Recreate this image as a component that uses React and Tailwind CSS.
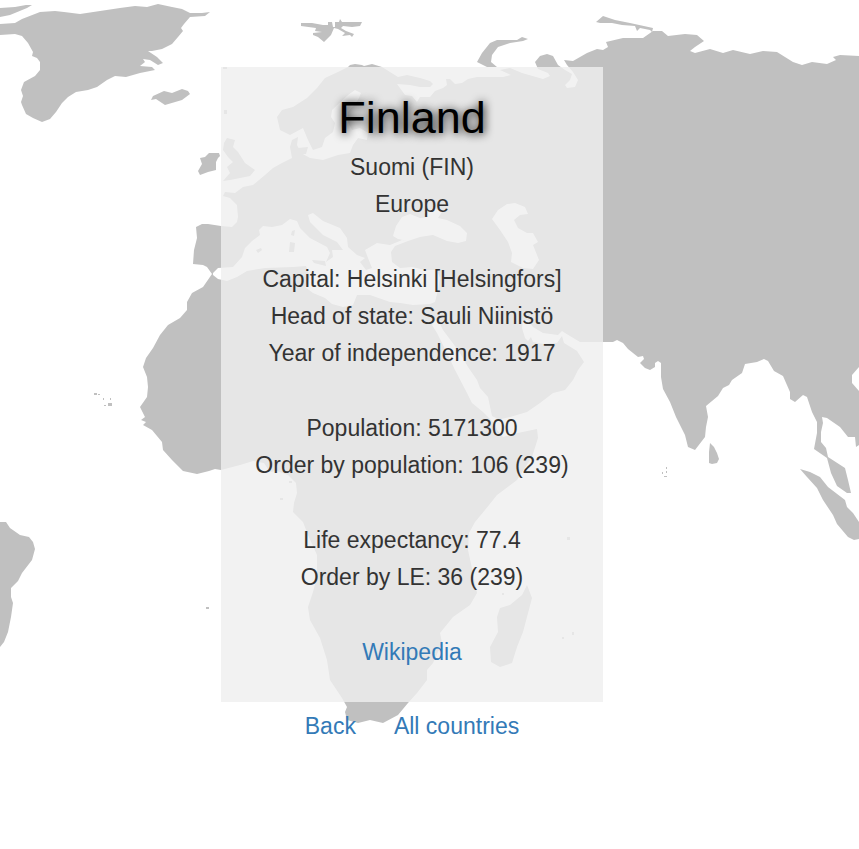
const LAND = [
  // Greenland
  'M0,24L15,23L22,19L40,12L55,11L64,12L80,14L100,11L120,8L135,6L147,7L158,4L172,7L182,9L190,13L202,13L210,12L205,16L190,17L184,24L181,28L183,31L178,37L172,44L162,49L152,51L148,51L157,57L163,63L158,65L150,60L143,59L145,62L140,66L152,67L155,70L140,73L126,77L115,76L107,80L97,87L88,90L76,92L68,97L62,103L56,112L50,119L42,122L33,118L26,114L22,105L21,102L23,96L21,90L24,82L35,76L40,70L40,62L37,58L32,56L33,52L28,43L22,36L15,34L0,35Z',
  'M0,8L15,7L26,5L32,5L27,8L10,15L0,17Z',
  // Iceland
  'M151,100L153,96L164,91L172,93L182,89L188,91L190,94L182,100L165,105L156,99Z',
  // Ireland and Great Britain
  'M200,158L205,157L209,153L219,153L220,156L218,158L216,162L216,170L208,172L200,175L198,171L202,164Z',
  'M227,138L235,140L233,147L238,152L245,163L255,170L250,176L230,180L223,181L230,173L227,167L233,162L228,157L223,150L224,143Z',
  // Svalbard
  'M301,23L312,23L323,25L328,25L328,22L332,22L333,27L335,27L335,22L339,22L340,19L342,22L362,22L360,26L352,27L343,26L341,28L346,31L354,34L352,37L350,35L342,36L345,33L338,29L334,28L331,35L324,42L318,37L313,35L313,33L322,32L315,31L316,28L301,26Z',
  // Novaya Zemlya and Severnaya Zemlya
  'M477,62L482,53L490,43L497,40L517,40L522,37L528,39L523,41L510,43L498,47L492,55L491,62L497,67L487,67Z',
  'M596,22L603,16L615,20L630,23L653,28L652,32L650,30L640,28L637,31L635,26L622,25L612,23L600,23Z',
  // Eurasia and Africa
  'M348,67L350,65L355,64L362,65L364,66L372,64L382,67L390,72L398,77L407,75L420,78L430,81L433,84L430,87L420,87L410,85L397,84L405,95L412,96L417,102L420,97L430,97L435,91L443,88L447,85L446,79L450,79L455,84L462,83L468,79L477,77L492,77L503,77L511,75L500,70L510,68L522,73L543,79L550,76L548,73L538,69L535,62L540,56L547,54L553,56L558,65L565,70L572,74L570,80L565,85L567,88L575,87L578,80L573,72L567,65L564,60L573,61L587,53L597,49L603,50L608,47L606,42L623,38L643,38L653,31L662,31L668,36L685,34L697,35L704,41L695,47L690,51L695,53L710,49L723,53L733,50L750,54L763,51L777,52L785,57L793,62L802,65L812,62L827,64L836,60L833,57L840,55L859,56L859,367L852,375L852,383L859,391L859,445L856,447L855,437L848,437L840,427L827,418L822,417L823,423L821,432L821,442L826,448L828,457L845,468L848,480L851,493L847,493L837,486L831,473L827,458L814,449L817,433L817,422L812,412L807,397L803,395L795,402L790,399L790,392L783,376L774,371L768,361L764,359L757,362L745,364L742,373L732,380L729,385L723,388L718,396L706,406L708,417L706,427L705,437L695,450L688,447L685,435L676,417L670,402L663,389L661,377L661,363L658,361L655,363L655,367L650,370L645,368L640,363L644,359L643,356L638,357L628,349L623,343L617,340L613,342L580,342L565,333L562,331L558,335L543,333L533,327L528,320L523,320L522,328L525,338L528,341L531,337L533,342L543,344L557,343L562,336L564,343L577,351L584,362L578,370L573,380L565,390L553,393L540,403L527,412L510,417L497,420L495,423L497,430L503,437L513,434L537,429L538,438L532,457L517,480L497,495L485,510L475,522L469,533L468,550L473,573L477,593L470,605L453,617L440,633L442,643L433,663L427,670L427,680L417,693L408,703L398,715L383,723L370,720L358,723L347,720L345,712L347,707L342,698L330,680L327,660L320,638L310,620L308,607L313,592L317,577L317,555L308,535L303,522L293,512L294,503L297,493L296,483L288,475L277,471L270,472L264,463L253,461L240,465L221,470L215,469L209,471L197,474L183,471L172,460L163,450L162,442L152,430L143,425L146,422L141,420L145,417L140,407L147,397L148,387L147,377L143,367L146,358L153,348L160,335L168,325L180,318L187,310L187,302L192,293L203,287L212,274L207,267L203,265L193,264L194,250L197,238L196,227L202,224L208,224L221,226L232,227L237,222L238,217L237,205L230,198L223,196L225,192L235,193L243,187L253,185L265,175L273,168L282,163L292,158L290,147L292,140L298,137L297,145L301,153L310,158L323,160L338,155L350,153L353,145L358,138L367,140L368,133L360,128L352,130L348,122L348,112L358,100L361,93L355,90L348,95L332,110L331,117L335,123L333,132L325,138L322,147L313,150L308,140L303,128L290,135L280,130L277,117L282,110L293,107L307,98L317,88L325,78L338,72Z',
  // Danish islands
  'M298,148L308,147L306,154L300,154Z',
  // Sri Lanka, Sumatra, Madagascar
  'M710,443L714,447L717,453L719,459L717,463L712,464L709,463L709,452Z',
  'M800,469L810,472L820,477L828,487L845,500L847,507L853,513L859,522L859,539L854,540L848,537L837,524L833,515L823,500L817,488L807,477Z',
  'M527,585L532,598L523,632L517,647L512,663L500,667L491,662L490,647L498,632L497,617L500,608L510,605L522,595Z',
  // South America
  'M0,522L6,522L10,528L20,535L29,537L33,542L35,549L32,560L22,573L18,581L11,588L11,597L13,603L11,617L8,632L4,642L0,647Z',
  // Small islands
  'M94,393h3v2h-3zM98,394h2v1h-2zM103,398h1v2h-1zM110,398h1v2h-1zM104,405h2v1h-2zM108,403h4v3h-4zM206,607h3v2h-3zM666,467h1v2h-1zM662,472h1v2h-1zM666,471h1v2h-1zM664,476h3v1h-3zM220,232h1v1h-1zM567,537h3v3h-3zM562,637h2v2h-2zM572,632h2v3h-2zM289,481h3v2h-3zM280,498h3v2h-3zM502,593h2v2h-2zM223,67h4v2h-4zM224,110h3v4h-3z',
]

const SEAS = [
  // Mediterranean with the Adriatic and Aegean
  'M213,273L218,268L233,267L242,257L245,248L252,241L260,235L259,230L263,226L272,227L282,225L290,219L297,221L300,228L310,238L327,247L330,253L326,262L333,257L332,250L343,250L337,242L323,235L310,222L308,215L313,213L323,221L340,228L347,238L348,247L357,255L365,258L360,262L366,270L372,268L368,258L365,250L377,243L390,245L402,240L408,241L395,246L391,252L392,262L400,268L412,267L425,270L437,270L440,278L438,290L435,302L430,304L413,305L400,303L390,302L370,295L357,295L353,305L343,307L332,304L325,298L313,293L305,287L310,277L306,266L293,267L265,268L247,271L237,277L227,281L218,279L213,275Z',
  // Black Sea
  'M393,236L396,226L402,217L410,214L420,218L428,217L424,212L434,208L442,212L438,218L447,220L460,226L467,233L466,241L458,243L447,241L433,235L420,237L408,241L398,239Z',
  // Caspian Sea
  'M492,219L498,210L507,204L515,203L525,207L528,214L520,215L514,220L518,228L527,233L533,233L538,242L533,245L535,250L539,260L533,269L523,268L511,262L512,253L508,242L500,230Z',
  // Red Sea
  'M432,325L437,318L443,330L452,342L460,353L468,367L477,380L480,388L488,397L492,416L498,419L496,425L483,412L472,403L467,393L455,370L447,353L437,333Z',
]

const SEA_ISLANDS = [
  'M312,260L325,261L326,266L314,263Z',
  'M290,242L295,243L294,252L289,252Z',
  'M292,231L295,230L294,236L291,235Z',
  'M256,250L261,248L262,250L258,253Z',
]

const FACTS = [
  ['Suomi (FIN)', 'Europe'],
  [
    'Capital: Helsinki [Helsingfors]',
    'Head of state: Sauli Niinistö',
    'Year of independence: 1917',
  ],
  ['Population: 5171300', 'Order by population: 106 (239)'],
  ['Life expectancy: 77.4', 'Order by LE: 36 (239)'],
]

function WorldMap() {
  return (
    <svg
      className="absolute inset-0 -z-10 h-full w-full"
      viewBox="0 0 859 849"
      preserveAspectRatio="xMidYMin slice"
      aria-hidden="true"
    >
      <path d={LAND.join('')} fill="#c0c0c0" />
      <path d={SEAS.join('')} fill="#ffffff" />
      <path d={SEA_ISLANDS.join('')} fill="#c0c0c0" />
    </svg>
  )
}

function TextLink({ children }) {
  return (
    <a href="#" className="text-[#337ab7] hover:underline">
      {children}
    </a>
  )
}

export default function App() {
  return (
    <div className="relative isolate min-h-screen overflow-hidden bg-white pt-[67px] pr-[35px] text-center font-['Liberation_Sans',Arial,sans-serif] text-[23px] leading-[37px] text-[#333333]">
      <WorldMap />
      <main className="mx-auto w-[382px] max-w-full bg-[#efefef]/80 pt-[26px] pb-[31px]">
        <h1 className="mb-[6px] text-[45px] leading-[50px] font-normal text-black [text-shadow:1px_1px_10px_#000]">
          Finland
        </h1>
        <div className="flex flex-col gap-[38px]">
          {FACTS.map((group) => (
            <div key={group[0]}>
              {group.map((line) => (
                <p key={line}>{line}</p>
              ))}
            </div>
          ))}
          <p>
            <TextLink>Wikipedia</TextLink>
          </p>
        </div>
      </main>
      <nav className="mt-[6px] flex justify-center gap-[38px]">
        <TextLink>Back</TextLink>
        <TextLink>All countries</TextLink>
      </nav>
    </div>
  )
}
